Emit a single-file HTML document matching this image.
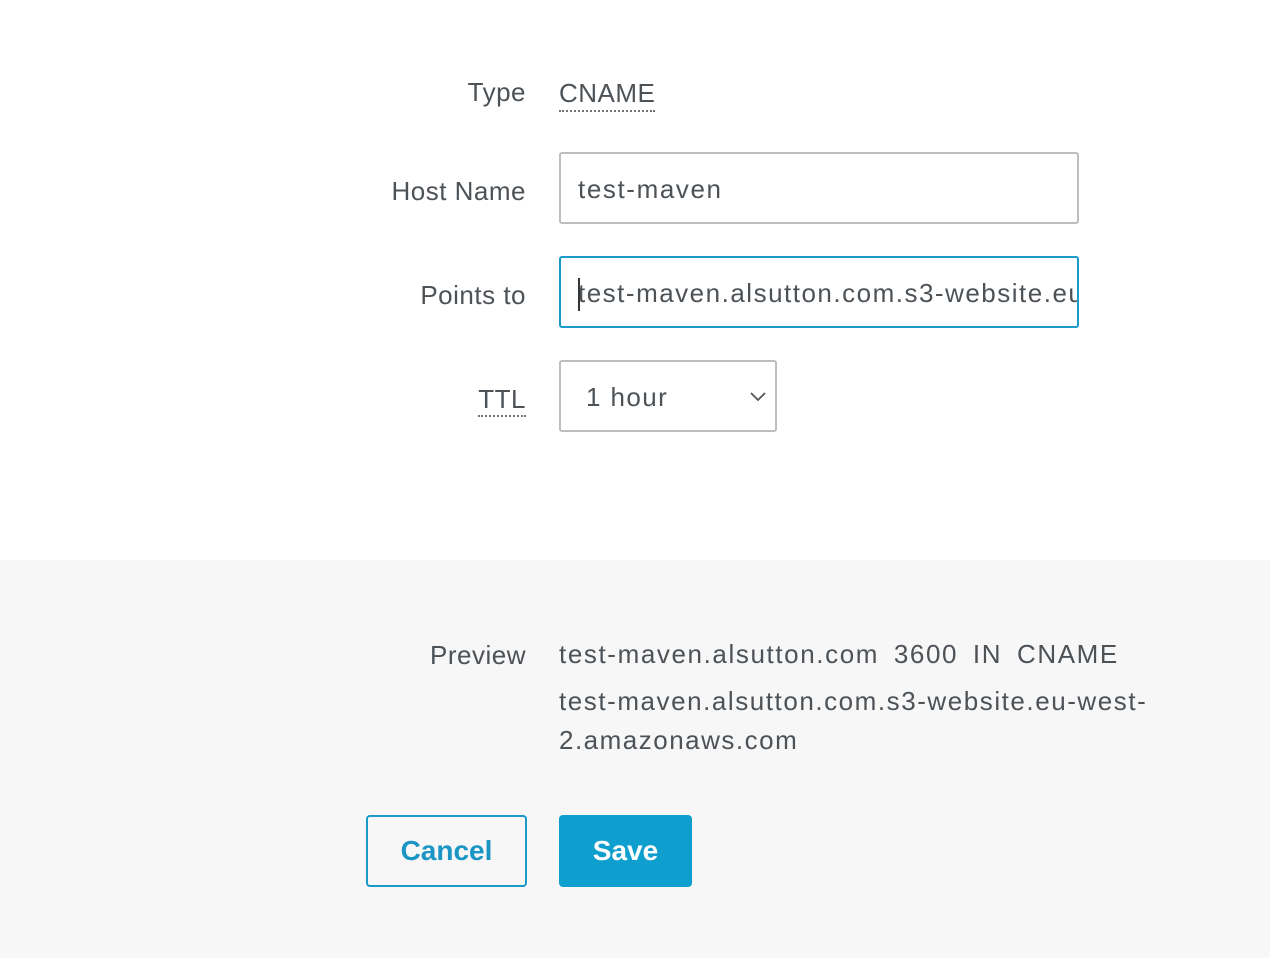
<!DOCTYPE html>
<html><head><meta charset="utf-8"><style>
*{margin:0;padding:0;box-sizing:border-box}
body{width:1270px;height:958px;position:relative;background:#fff;font-family:"Liberation Sans",sans-serif;color:#4d5257;font-size:26px;overflow:hidden}
.a{position:absolute;white-space:nowrap;line-height:32px}
.lbl{right:744px;text-align:right;letter-spacing:0.5px}
.box{position:absolute;border:2px solid #bdbdbd;border-radius:3px;background:#fff}
.foot{position:absolute;left:0;top:560px;width:1270px;height:398px;background:#f7f7f7}
.dot{border-bottom:2px dotted #6d7378}
</style></head><body>
<div class="a lbl" style="top:76px">Type</div>
<div class="a" style="left:559px;top:77px;letter-spacing:0.5px"><span class="dot" style="padding-bottom:2px">CNAME</span></div>

<div class="a lbl" style="top:175px">Host Name</div>
<div class="box" style="left:559px;top:152px;width:520px;height:72px"></div>
<div class="a" style="left:578px;top:173px;letter-spacing:1.6px">test-maven</div>

<div class="a lbl" style="top:279px">Points to</div>
<div class="box" style="left:559px;top:256px;width:520px;height:72px;border-color:#1a9acb;overflow:hidden">
<div class="a" style="left:17px;top:19px;letter-spacing:1.5px">test-maven.alsutton.com.s3-website.eu</div>
<div style="position:absolute;left:17px;top:20px;width:2px;height:33px;background:#333"></div>
</div>

<div class="a lbl" style="top:383px"><span class="dot" style="padding-bottom:1px">TTL</span></div>
<div class="box" style="left:559px;top:360px;width:218px;height:72px"></div>
<div class="a" style="left:586px;top:381px;letter-spacing:1.4px">1 hour</div>
<svg style="position:absolute;left:749px;top:390px" width="18" height="12"><path d="M2 3 L9 10 L16 3" fill="none" stroke="#555" stroke-width="1.8"/></svg>

<div class="foot"></div>
<div class="a lbl" style="top:639px">Preview</div>
<div class="a" style="left:559px;top:638px;letter-spacing:1.6px;word-spacing:6px">test-maven.alsutton.com 3600 IN CNAME</div>
<div class="a" style="left:559px;top:685px;letter-spacing:1.55px">test-maven.alsutton.com.s3-website.eu-west-</div>
<div class="a" style="left:559px;top:724px;letter-spacing:1.5px">2.amazonaws.com</div>

<div style="position:absolute;left:366px;top:815px;width:161px;height:72px;border:2px solid #1a9acb;border-radius:4px;color:#1a95c4;font-weight:bold;font-size:28px;text-align:center;line-height:68px">Cancel</div>
<div style="position:absolute;left:559px;top:815px;width:133px;height:72px;background:#0e9fcf;border-radius:4px;color:#fff;font-weight:bold;font-size:28px;text-align:center;line-height:72px">Save</div>
</body></html>
